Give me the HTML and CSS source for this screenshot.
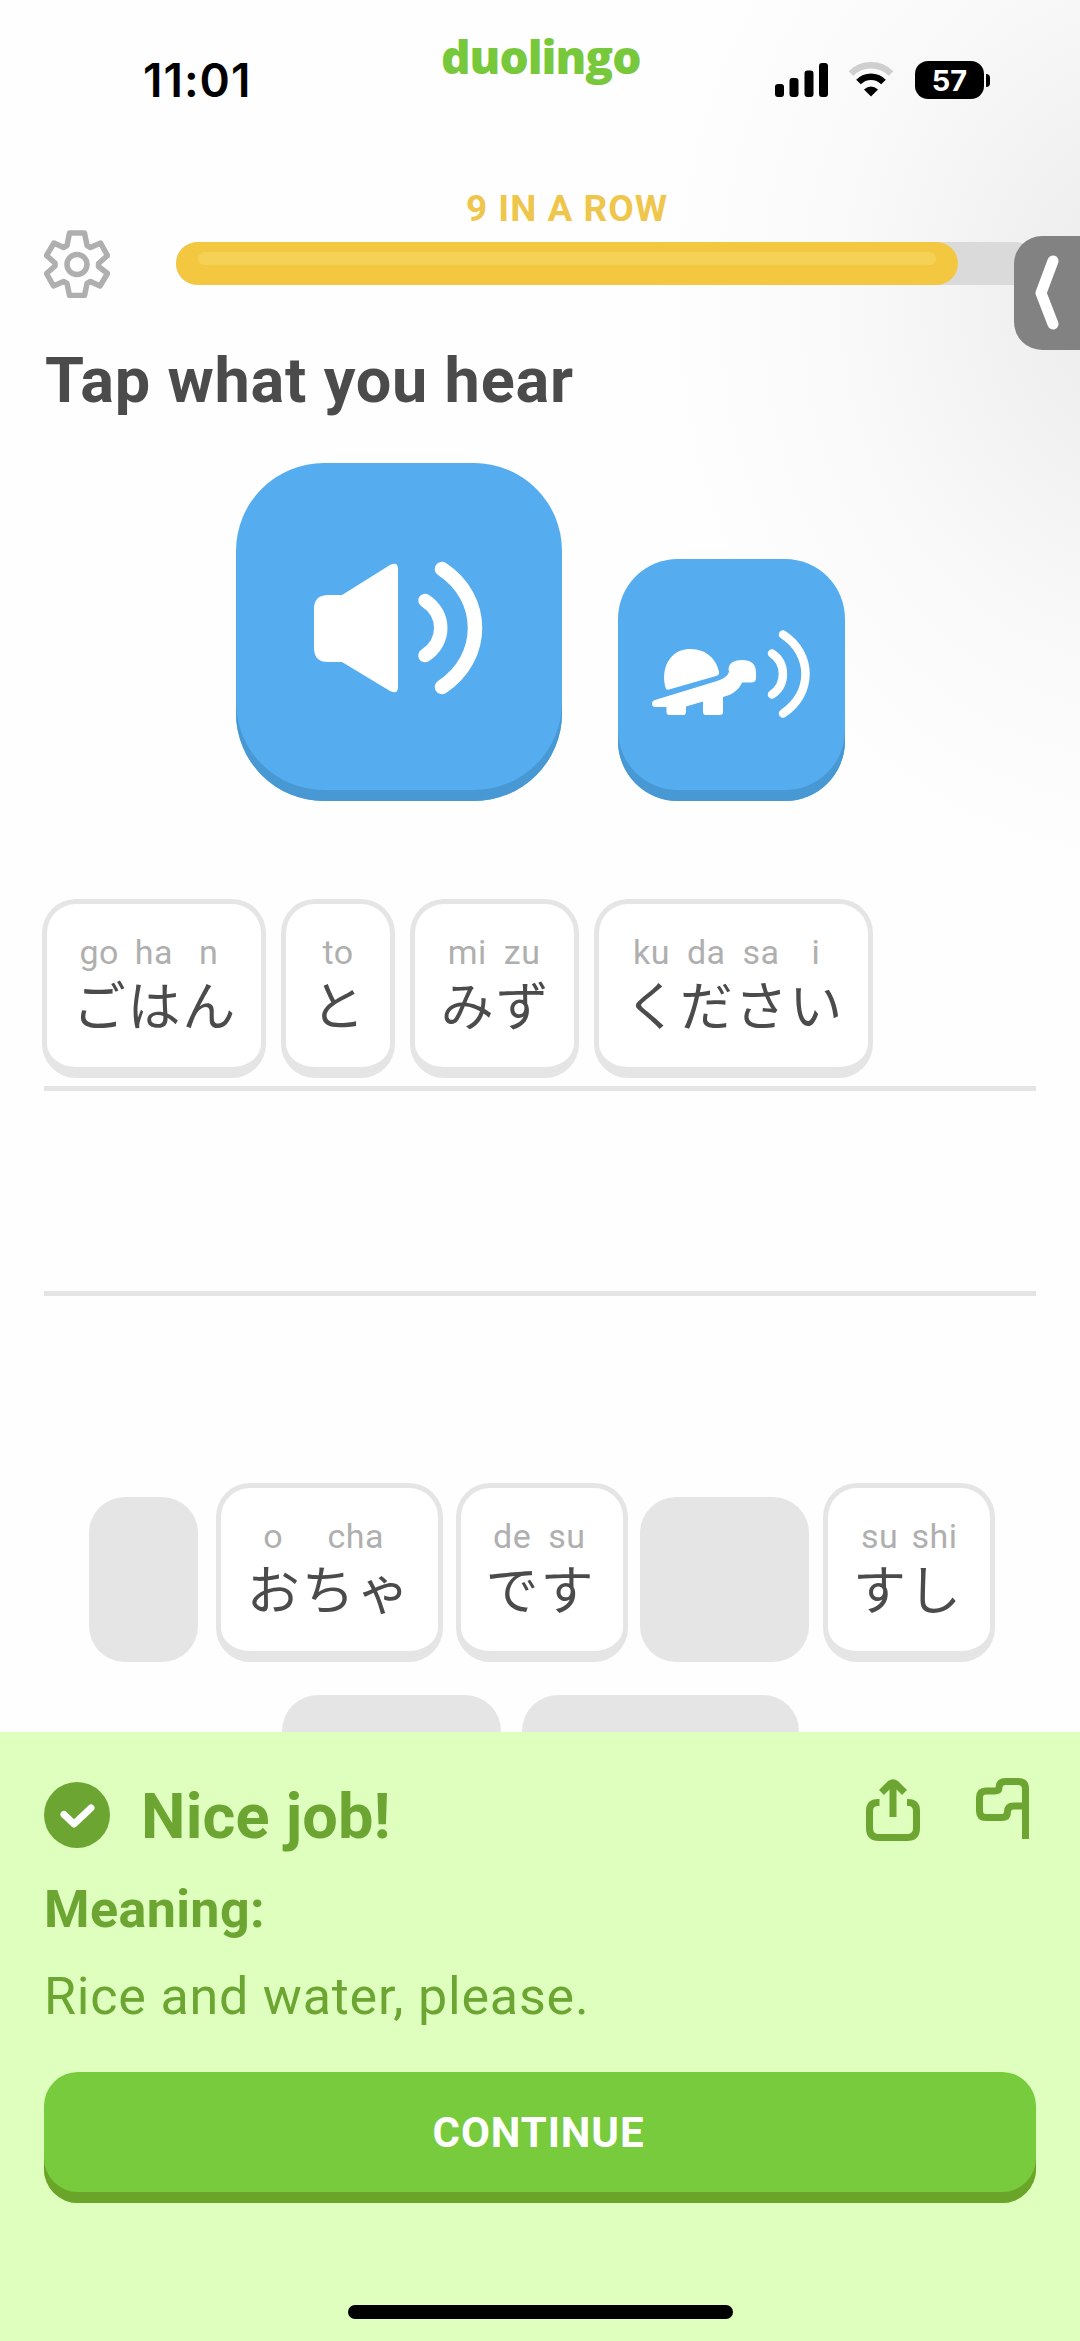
FILE: index.html
```html
<!DOCTYPE html>
<html lang="en">
<head>
<meta charset="utf-8">
<title>Duolingo lesson</title>
<link rel="stylesheet" href="styles.css">
</head>
<body>
<div class="screen">
  <main class="lesson">
    <header class="status">
      <span class="time">11:01</span>
      <span class="brand">duolingo</span>
      <span class="indicators">
        <svg class="signal" width="54" height="34" viewBox="0 0 54 34">
          <rect x="0" y="21" width="9" height="13" rx="3"/><rect x="14.5" y="15" width="9" height="19" rx="3"/>
          <rect x="29.5" y="7.500" width="9" height="26.500" rx="3"/><rect x="44" y="0" width="9" height="34" rx="3"/>
        </svg>
        <svg class="wifi" width="46" height="35" viewBox="0 0 46 35" fill="none">
          <path d="M3 11.500C14 .5 32 .5 43 11.500" stroke="#cfcfcf" stroke-width="6.500"/>
          <path d="M10.500 20C17.500 13 28.500 13 35.500 20" stroke="#000" stroke-width="6.500"/>
          <path d="M16 27.500Q23 21.500 30 27.500L23 34.500Z" fill="#000"/>
        </svg>
        <span class="battery"><span class="level">57</span><span class="cap"></span></span>
      </span>
    </header>

    <section class="progress">
      <svg class="gear" width="66" height="68" viewBox="0 0 66 68" fill="none" stroke="#afafaf" stroke-width="5.500" stroke-linejoin="round">
        <path d="M25.500 3H40.500L43 15.500L46.500 17.500L56.500 13L63.500 25.500L54.500 33.500V36.500L63.500 43.500L56 56L46.500 51.500L43 53.500L40.500 65.500H25.500L23 53.500L19.500 51.500L9.500 56L2.500 43.500L11 36V33L2.500 25.500L10 13L19.500 17.500L23 15.500Z"/>
        <circle cx="33" cy="34.500" r="10"/>
      </svg>
      <div class="meter">
        <p class="streak">9 IN A ROW</p>
        <div class="track"><div class="fill"><div class="shine"></div></div></div>
      </div>
    </section>

    <h1 class="prompt">Tap what you hear</h1>

    <section class="listen">
      <button class="play play-normal" aria-label="Play">
        <svg width="180" height="136" viewBox="0 0 180 136">
          <path fill="#fff" d="M16 34H30L78 4Q86 0 86 8V126Q86 134 78 130L30 101H16Q2 101 2 87V48Q2 34 16 34Z"/>
          <g fill="none" stroke="#fff" stroke-linecap="round"><path stroke-width="13.500" d="M113 39.500C134 53 134 81 113 94.500"/><path stroke-width="14.500" d="M130 8C174 37 174 97 130 126"/></g>
        </svg>
      </button>
      <button class="play play-slow" aria-label="Play slowly">
        <svg width="164" height="92" viewBox="0 0 164 92">
          <g fill="#fff">
            <path d="M15 61C9 42 18 21 39 21C57 21 66 33 68 44Q68.500 47 65 48L18 61.500Q15.500 62 15 61Z"/>
            <path d="M4 72L66 53Q76 50 78 44C76 36 82 32 91 32C100 32 105 36 105 44V50Q105 54 101 54.500H91C88 62 81 67 72 69V84Q72 87 69 87H55Q52 87 52 84V73.500L35 78.500V84Q35 87 32 87H18.500Q15.500 87 15.500 84V79H5Q1 79 1 75.500Q1 73 4 72Z"/>
          </g>
          <g fill="none" stroke="#fff" stroke-linecap="round" stroke-width="8.500"><path d="M121 25.500C135.500 35 135.500 57 121 66.500"/><path d="M132 6.500C162 26 162 66 132 85.500"/></g>
        </svg>
      </button>
    </section>

    <section class="answer">
      <div class="row filled">
        <div class="tile"><span class="col"><i>go</i><b>ご</b></span><span class="col"><i>ha</i><b>は</b></span><span class="col"><i>n</i><b>ん</b></span></div>
        <div class="tile"><span class="col"><i>to</i><b>と</b></span></div>
        <div class="tile"><span class="col"><i>mi</i><b>み</b></span><span class="col"><i>zu</i><b>ず</b></span></div>
        <div class="tile"><span class="col"><i>ku</i><b>く</b></span><span class="col"><i>da</i><b>だ</b></span><span class="col"><i>sa</i><b>さ</b></span><span class="col"><i>i</i><b>い</b></span></div>
      </div>
      <div class="row"></div>
    </section>

    <section class="bank">
      <div class="bank-row">
        <div class="slot slot-1"></div>
        <div class="tile three"><span class="col"><i>o</i><b>お</b></span><span class="col wide"><i>cha</i><b>ちゃ</b></span></div>
        <div class="tile two"><span class="col"><i>de</i><b>で</b></span><span class="col"><i>su</i><b>す</b></span></div>
        <div class="slot slot-2"></div>
        <div class="tile two"><span class="col"><i>su</i><b>す</b></span><span class="col"><i>shi</i><b>し</b></span></div>
      </div>
      <div class="bank-row second">
        <div class="slot slot-3"></div>
        <div class="slot slot-4"></div>
      </div>
    </section>

    <div class="drawer">
      <svg width="24" height="76" viewBox="0 0 24 76" fill="none" stroke="#fff" stroke-width="11" stroke-linecap="round" stroke-linejoin="round"><path d="M18 6L6 38L18 69"/></svg>
    </div>
  </main>

  <footer class="result">
    <div class="verdict">
      <svg class="tick" width="66" height="66" viewBox="0 0 66 66"><circle cx="33" cy="33" r="33" fill="#6ca531"/><path d="M20 32.500L30 42L47 26" fill="none" stroke="#fff" stroke-width="7" stroke-linecap="round" stroke-linejoin="round"/></svg>
      <h2>Nice job!</h2>
      <svg class="share" width="54" height="64" viewBox="0 0 54 64" fill="none" stroke="#6ca531" stroke-width="7" stroke-linejoin="round"><path d="M13.500 24.500H12Q3.500 24.500 3.500 33V50Q3.500 59.500 13 59.500H41Q50.500 59.500 50.500 50V33Q50.500 24.500 42 24.500H41M27 39V5M15.500 14.500L24 6Q27 3.500 30 6L38.500 14.500"/></svg>
      <svg class="flag" width="54" height="64" viewBox="0 0 54 64" fill="none" stroke="#6ca531" stroke-width="7" stroke-linejoin="round"><path d="M49.500 61V11Q49.500 3.500 42 3.500H29.500Q23 3.500 23 9.500Q23 13 18.500 13H10Q3.500 13 3.500 19.500V33Q3.500 39.500 10 39.500H26Q31.500 39.500 31.500 34Q31.500 28 37.500 28H49.500"/></svg>
    </div>
    <h3>Meaning:</h3>
    <p class="meaning">Rice and water, please.</p>
    <button class="continue">CONTINUE</button>
    <div class="home"></div>
  </footer>
</div>
</body>
</html>
```
FILE: styles.css
```css
* { box-sizing: border-box; }
body { margin: 0; background: #fff; font-family: Roboto, "Noto Sans CJK JP", sans-serif; }
h1, h2, h3, p { margin: 0; }
button { border: 0; padding: 0; font: inherit; }
svg { display: block; flex: none; }

.screen { width: 1080px; height: 2341px; display: flex; flex-direction: column; overflow: hidden; }
.lesson {
  position: relative; flex: none; height: 1732px; overflow: hidden;
  display: flex; flex-direction: column;
  background: radial-gradient(ellipse 500px 590px at 1150px 300px, #ebebeb 0%, #f0f0f0 25%, #f9f9f9 60%, #fefefe 100%);
}
.lesson > * { flex: none; }

.status { display: grid; grid-template-columns: 441px 199px 1fr; height: 125px; }
.time { padding: 52px 0 0 143px; font: 600 46px/56px Inter, sans-serif; letter-spacing: 1px; }
.brand { padding-top: 25px; font: 800 46px/62px "Open Sans", sans-serif; letter-spacing: -1px; color: #78c83c; white-space: nowrap; }
.indicators { display: flex; padding: 61px 0 0 135px; }
.signal { margin-top: 2px; }
.wifi { margin: 1px 0 0 19px; }
.battery { display: flex; align-items: center; margin-left: 21px; height: 38px; }
.level { width: 69px; height: 38px; border-radius: 13px; background: #000; color: #fff; text-align: center; font: 700 29px/39px Inter, sans-serif; }
.cap { width: 4px; height: 13px; margin-left: 2px; border-radius: 0 5px 5px 0; background: #000; }

.progress { display: flex; padding: 62px 44px 0 44px; height: 160px; }
.gear { margin-top: 43px; }
.meter { margin-left: 66px; flex: 1; }
.streak { width: 782px; height: 55px; padding-top: 1px; text-align: center; color: #efc64c; font-weight: 700; font-size: 37px; line-height: 41px; letter-spacing: 1px; }
.track { height: 43px; border-radius: 22px; background: #dadada; }
.fill { width: 782px; height: 43px; padding: 10px 22px; border-radius: 22px; background: #f3c840; }
.shine { height: 13px; border-radius: 7px; background: #f5d156; }

.prompt { padding: 62px 0 0 45px; height: 177px; color: #4b4b4b; font-size: 63px; line-height: 68px; font-weight: 700; letter-spacing: 0.8px; }

.listen { display: flex; align-items: flex-end; gap: 56px; padding-left: 236px; height: 339px; }
.play { display: flex; background: #55acef; box-shadow: inset 0 -11px #4898d4; }
.play-normal { width: 326px; height: 338px; border-radius: 88px; padding: 98px 0 0 76px; }
.play-slow { width: 227px; height: 242px; border-radius: 60px; padding: 69px 0 0 33px; }

.answer { margin: 98px 44px 0 42px; }
.row { height: 205px; margin-left: 2px; border-bottom: 5px solid #e5e5e5; }
.row.filled { display: flex; gap: 15px; height: 192px; }
.row.filled .tile:first-child { margin-left: -2px; }
.tile {
  display: flex; justify-content: center; flex: none; height: 179px; padding: 31px 24.75px 0;
  border: 5px solid #e5e5e5; border-bottom-width: 11px; border-radius: 34px; background: #fff;
}
.tile.three { width: 227.5px; padding: 31px 2px 0 0; }
.tile.two { width: 172px; padding: 31px 4px 0 0; }
.col { width: 54.8px; display: flex; flex-direction: column; align-items: center; }
.col.wide { width: 110px; }
.col i { font-style: normal; font-size: 34px; line-height: 34px; letter-spacing: 0.5px; color: #afafaf; }
.col b { margin: 5px -2px 0 0; font: 400 53px/58px "Noto Sans CJK JP", sans-serif; letter-spacing: 2px; color: #4b4b4b; white-space: nowrap; }

.bank { padding-top: 187px; }
.bank-row { display: flex; align-items: flex-end; padding-left: 89px; gap: 12.5px; }
.bank-row.second { padding: 33px 0 0 282px; gap: 21px; }
.slot { flex: none; height: 165px; border-radius: 36px; background: #e5e5e5; }
.slot-1 { width: 109px; margin-right: 5px; }
.slot-2 { width: 168.5px; margin-right: 2px; }
.slot-3 { width: 219px; }
.slot-4 { width: 277px; }

.drawer { position: absolute; right: 0; top: 236px; width: 66px; height: 114px; padding: 19px 0 0 21px; border-radius: 28px 0 0 28px; background: #828282; }

.result { flex: 1; display: flex; flex-direction: column; padding: 0 44px; background: #dfffbf; color: #6ca531; }
.verdict { display: flex; height: 139px; padding-top: 46px; }
.tick { margin-top: 4px; }
.verdict h2 { flex: 1; margin-left: 31px; font-size: 63px; line-height: 77px; font-weight: 700; letter-spacing: 0.2px; }
.flag { margin: 0 6px 0 56px; }
h3 { height: 88px; padding-top: 1px; font-size: 52px; line-height: 76px; font-weight: 700; letter-spacing: 0.4px; }
.meaning { height: 113px; font-size: 52px; line-height: 76px; letter-spacing: 0.8px; }
.continue { flex: none; height: 131px; padding: 0 3px 11px 0; border-radius: 34px; background: #78cb3c; box-shadow: inset 0 -11px #6aa52a; color: #fff; font-size: 42px; font-weight: 700; letter-spacing: 0.9px; }
.home { width: 385px; height: 14px; margin: 102px 0 0 304px; border-radius: 7px; background: #000; }
```
